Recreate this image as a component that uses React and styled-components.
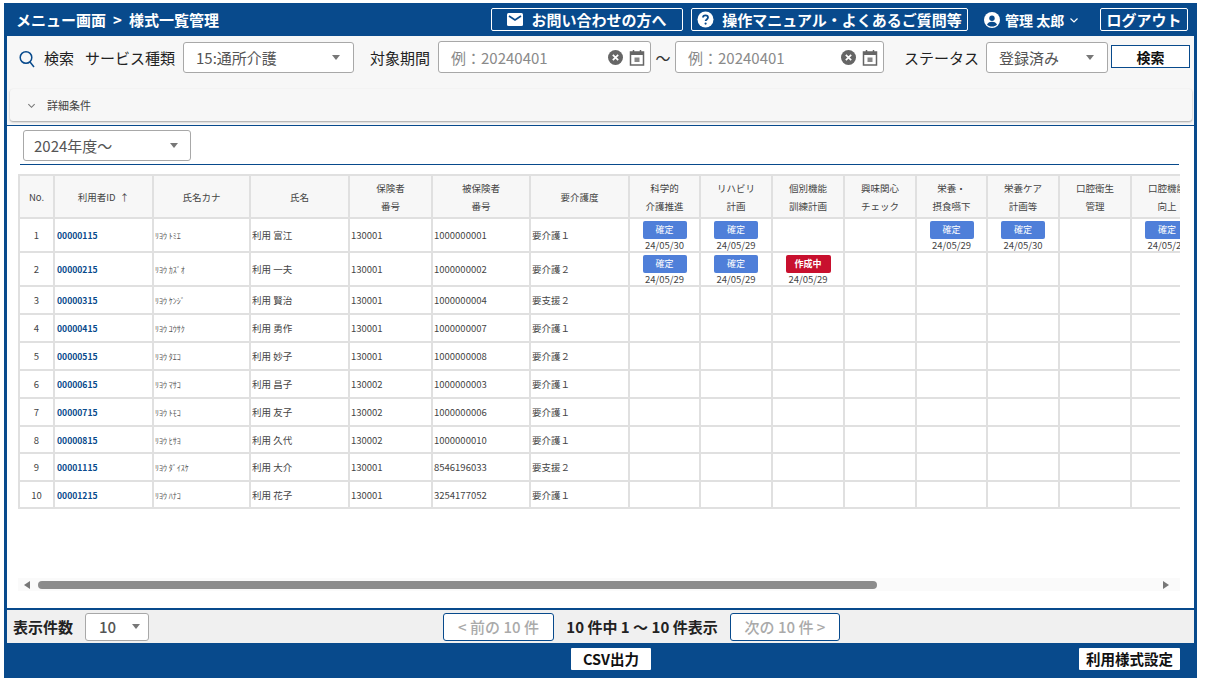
import React from "react";
import styled, { createGlobalStyle } from "styled-components";

const BLUE = "#084a8c";
const FONT = `"Noto Sans CJK JP", "Noto Sans", sans-serif`;

const Global = createGlobalStyle`
  html, body { margin: 0; padding: 0; background: #fff; }
  body { font-family: ${FONT}; color: #222; }
  * { box-sizing: border-box; }
`;

const Frame = styled.div`
  margin: 3px 0 0 4px;
  width: 1193px;
  height: 675px;
  background: ${BLUE};
  padding: 0 3px;
  display: flex;
  flex-direction: column;
`;
const Header = styled.header`
  height: 33px;
  flex: none;
  display: flex;
  align-items: center;
  padding: 0 6px 0 9px;
  color: #fff;
  font-weight: 700;
  font-size: 15px;
`;
const Title = styled.div`
  flex: 1;
  display: flex;
  align-items: center;
  gap: 7px;
  white-space: nowrap;
`;
const HeadButton = styled.div`
  height: 23px;
  width: ${(p) => p.$w}px;
  margin-right: ${(p) => p.$mr || 0}px;
  border: 1px solid #fff;
  border-radius: 2px;
  display: flex;
  align-items: center;
  justify-content: center;
  gap: 8px;
  white-space: nowrap;
`;
const UserMenu = styled.div`
  width: 99px;
  margin-right: 17px;
  display: flex;
  align-items: center;
  gap: 5px;
  font-size: 14px;
  white-space: nowrap;
`;
const SearchArea = styled.section`
  flex: none;
  height: 90px;
  background: #f7f7f7;
  border-bottom: 1px solid ${BLUE};
  padding: 6px 0 0 3px;
`;
const SearchRow = styled.div`
  height: 47px;
  padding-left: 9px;
  display: flex;
  align-items: flex-start;
  font-size: 15px;
  color: #333;
`;
const FieldLabel = styled.span`
  height: 32px;
  line-height: 32px;
  margin-left: ${(p) => p.$ml || 0}px;
  margin-right: ${(p) => p.$mr || 0}px;
  white-space: nowrap;
  color: #222;
`;
const SelectBox = styled.div`
  width: ${(p) => p.$w}px;
  height: ${(p) => p.$h || 31}px;
  flex: none;
  background: #fff;
  border: 1px solid #a8a8a8;
  border-radius: 3px;
  padding: 0 ${(p) => p.$pr || 13}px 0 ${(p) => p.$pl || 12}px;
  display: flex;
  align-items: center;
  justify-content: space-between;
  font-size: 15px;
  color: #555;
  white-space: nowrap;
`;
const Caret = styled.span`
  width: 0;
  height: 0;
  border-left: 4.5px solid transparent;
  border-right: 4.5px solid transparent;
  border-top: 5px solid #777;
`;
const DateBox = styled.div`
  width: ${(p) => p.$w}px;
  height: 32px;
  flex: none;
  margin-top: -1px;
  background: #fff;
  border: 1px solid #a8a8a8;
  border-radius: 3px;
  padding: 0 5px 0 12px;
  display: flex;
  align-items: center;
  gap: 6px;
  font-size: 15px;
  color: #8a8a8a;
`;
const Placeholder = styled.span`
  flex: 1;
  white-space: nowrap;
`;
const Tilde = styled.span`
  width: 24px;
  height: 31px;
  line-height: 31px;
  text-align: center;
  color: #333;
`;
const SearchButton = styled.button`
  width: 79px;
  height: 23px;
  margin: 3px 0 0 3px;
  background: #fff;
  border: 1px solid ${BLUE};
  border-radius: 0;
  font: 700 14px ${FONT};
  color: #111;
  padding: 0;
`;
const Accordion = styled.div`
  height: 32px;
  width: 1182px;
  background: #f7f7f7;
  border-radius: 3px;
  box-shadow: 0 1px 2px rgba(0, 0, 0, 0.35);
  display: flex;
  align-items: center;
  gap: 11px;
  padding-left: 17px;
  font-size: 11px;
  color: #444;
`;
const Content = styled.main`
  flex: 1;
  min-height: 0;
  background: #fff;
  padding: 4px 11px 0 11px;
  display: flex;
  flex-direction: column;
`;
const YearRow = styled.div`
  height: 35px;
  flex: none;
  padding: 0 0 0 3px;
  width: 1159px;
  margin-left: 2px;
  border-bottom: 1px solid ${BLUE};
`;
const TableClip = styled.div`
  margin-top: 9px;
  width: 1162px;
  height: 404px;
  overflow: hidden;
  flex: none;
`;
const Table = styled.table`
  border-collapse: collapse;
  table-layout: fixed;
  width: 1184px;
  font-size: 9.5px;
  color: #444;
`;
const Th = styled.th`
  height: 43px;
  background: #f7f7f7;
  border: 2px solid #e0e0e0;
  font-weight: 400;
  line-height: 18px;
  padding: 0;
  white-space: pre-line;
  text-align: center;
  overflow: hidden;
`;
const Tr = styled.tr`
  height: ${(p) => p.$h}px;
`;
const Td = styled.td`
  border: 2px solid #e0e0e0;
  padding: 0 1px;
  white-space: nowrap;
  overflow: hidden;
  vertical-align: ${(p) => (p.$top ? "top" : "middle")};
  text-align: ${(p) => (p.$center ? "center" : "left")};
`;
const IdText = styled.span`
  color: ${BLUE};
  font-weight: 700;
  font-size: 8.6px;
  padding-left: 1px;
`;
const KanaText = styled.span`
  font-size: 8px;
  color: #555;
`;
const Status = styled.div`
  width: ${(p) => (p.$red ? 45 : 44)}px;
  height: 18px;
  margin: 2px auto 0;
  border-radius: 2px;
  background: ${(p) => (p.$red ? "#c8102e" : "#4f7fd9")};
  color: #fff;
  font-size: 9px;
  font-weight: ${(p) => (p.$red ? 700 : 400)};
  line-height: 18px;
  text-align: center;
`;
const StatusDate = styled.div`
  font-size: 9.5px;
  line-height: 12px;
  color: #444;
`;
const ScrollBar = styled.div`
  width: 1162px;
  height: 13px;
  background: #fafafa;
  display: flex;
  align-items: center;
  padding: 0 10px 0 6px;
`;
const ScrollArrow = styled.span`
  width: 0;
  height: 0;
  flex: none;
  border-top: 4px solid transparent;
  border-bottom: 4px solid transparent;
  ${(p) => (p.$right ? "border-left: 6px solid #777; margin-left: 286px;" : "border-right: 6px solid #777; margin-right: 8px;")}
`;
const ScrollThumb = styled.span`
  width: 839px;
  flex: none;
  height: 8px;
  border-radius: 4px;
  background: #8c8c8c;
`;
const Pager = styled.section`
  flex: none;
  height: 35px;
  background: #f0f0f0;
  border-top: 2px solid ${BLUE};
  display: flex;
  align-items: center;
  padding-left: 6px;
  font-size: 15px;
  font-weight: 500;
  color: #222;
`;
const PagerLabel = styled.span`
  width: 72px;
  font-size: 15px;
  font-weight: 700;
  white-space: nowrap;
`;
const PagerButton = styled.div`
  width: ${(p) => p.$w}px;
  height: 28px;
  flex: none;
  background: #fff;
  border: 1px solid ${BLUE};
  border-radius: 3px;
  color: #aaa;
  font-size: 15px;
  font-weight: 500;
  display: flex;
  align-items: center;
  justify-content: center;
  white-space: nowrap;
  margin-left: ${(p) => p.$ml || 0}px;
`;
const PagerInfo = styled.span`
  width: 176px;
  text-align: center;
  font-weight: 700;
  white-space: nowrap;
`;
const Footer = styled.footer`
  flex: none;
  height: 35px;
  display: flex;
  align-items: flex-start;
  padding-top: 5px;
`;
const FootButton = styled.div`
  width: ${(p) => p.$w}px;
  height: 22px;
  margin-left: ${(p) => p.$ml}px;
  background: #fff;
  border-radius: 1px;
  color: #111;
  font-weight: 700;
  font-size: 14.5px;
  line-height: 22px;
  text-align: center;
  white-space: nowrap;
`;

const Mail = () => (
  <svg width="16" height="13" viewBox="0 0 16 13"><rect x="0" y="0" width="16" height="13" rx="1.5" fill="#fff"/><path d="M2 3l6 4 6-4" fill="none" stroke={BLUE} strokeWidth="1.6"/></svg>
);
const Help = () => (
  <svg width="17" height="17" viewBox="0 0 17 17"><circle cx="8.5" cy="8.5" r="8" fill="#fff"/><path d="M6 6.6C6 5.2 7.1 4.3 8.5 4.3s2.5.9 2.5 2.2c0 1.9-2.4 1.9-2.4 3.6" fill="none" stroke={BLUE} strokeWidth="1.8"/><circle cx="8.6" cy="12.6" r="1.1" fill={BLUE}/></svg>
);
const User = () => (
  <svg width="16" height="16" viewBox="0 0 16 16"><circle cx="8" cy="8" r="8" fill="#fff"/><circle cx="8" cy="6.2" r="2.7" fill={BLUE}/><path d="M3 12.4c1-2 3-2.7 5-2.7s4 .7 5 2.7C11.8 13.8 10 14.5 8 14.5s-3.8-.7-5-2.1z" fill={BLUE}/></svg>
);
const Chevron = ({ color = "#fff", size = 10 }) => (
  <svg width={size} height={size} viewBox="0 0 10 10" style={{ flex: "none" }}><path d="M1.5 3.5L5 7l3.5-3.5" fill="none" stroke={color} strokeWidth="1.2"/></svg>
);
const Search = () => (
  <svg width="16" height="18" viewBox="0 0 16 18" style={{ flex: "none", marginTop: 8 }}><circle cx="7" cy="7.5" r="5.8" fill="none" stroke={BLUE} strokeWidth="1.5"/><path d="M11 12l4 5" stroke={BLUE} strokeWidth="1.5"/></svg>
);
const Clear = () => (
  <svg width="15" height="15" viewBox="0 0 14 14" style={{ flex: "none" }}><circle cx="7" cy="7" r="7" fill="#666"/><path d="M4.5 4.5l5 5M9.5 4.5l-5 5" stroke="#fff" strokeWidth="1.6"/></svg>
);
const Calendar = () => (
  <svg width="16" height="17" viewBox="0 0 15 17" style={{ flex: "none" }}><path d="M1 3h13v13H1z" fill="none" stroke="#666" strokeWidth="1.5"/><path d="M1 3h13v3H1z" fill="#666"/><path d="M4 1v3M11 1v3" stroke="#666" strokeWidth="1.5"/><rect x="5" y="8.5" width="5" height="4.5" fill="#888"/></svg>
);

const columns = [
  ["No.", 35], ["利用者ID\u00a0\u00a0↑", 99], ["氏名カナ", 97], ["氏名", 99], ["保険者\n番号", 83], ["被保険者\n番号", 98], ["要介護度", 99],
  ["科学的\n介護推進", 71], ["リハビリ\n計画", 72], ["個別機能\n訓練計画", 72], ["興味関心\nチェック", 72], ["栄養・\n摂食嚥下", 71], ["栄養ケア\n計画等", 72], ["口腔衛生\n管理", 72], ["口腔機能\n向上", 72],
];
const ok = (d) => ({ label: "確定", date: d });
const rows = [
  ["00000115", "ﾘﾖｳ ﾄﾐｴ", "利用 富江", "130001", "1000000001", "要介護１", 34, { 0: ok("24/05/30"), 1: ok("24/05/29"), 4: ok("24/05/29"), 5: ok("24/05/30"), 7: ok("24/05/29") }],
  ["00000215", "ﾘﾖｳ ｶｽﾞｵ", "利用 一夫", "130001", "1000000002", "要介護２", 34, { 0: ok("24/05/29"), 1: ok("24/05/29"), 2: { label: "作成中", date: "24/05/29", red: true } }],
  ["00000315", "ﾘﾖｳ ｹﾝｼﾞ", "利用 賢治", "130001", "1000000004", "要支援２", 28],
  ["00000415", "ﾘﾖｳ ﾕｳｻｸ", "利用 勇作", "130001", "1000000007", "要介護１", 28],
  ["00000515", "ﾘﾖｳ ﾀｴｺ", "利用 妙子", "130001", "1000000008", "要介護２", 28],
  ["00000615", "ﾘﾖｳ ﾏｻｺ", "利用 昌子", "130002", "1000000003", "要介護１", 28],
  ["00000715", "ﾘﾖｳ ﾄﾓｺ", "利用 友子", "130002", "1000000006", "要介護１", 28],
  ["00000815", "ﾘﾖｳ ﾋｻﾖ", "利用 久代", "130002", "1000000010", "要介護１", 27],
  ["00001115", "ﾘﾖｳ ﾀﾞｲｽｹ", "利用 大介", "130001", "8546196033", "要支援２", 28],
  ["00001215", "ﾘﾖｳ ﾊﾅｺ", "利用 花子", "130001", "3254177052", "要介護１", 27],
];

export default function App() {
  return (
    <Frame>
      <Global />
      <Header>
        <Title>メニュー画面 <span>&gt;</span> 様式一覧管理</Title>
        <HeadButton $w={192} $mr={8}><Mail />お問い合わせの方へ</HeadButton>
        <HeadButton $w={277} $mr={16}><Help />操作マニュアル・よくあるご質問等</HeadButton>
        <UserMenu><User />管理 太郎<Chevron /></UserMenu>
        <HeadButton $w={88}>ログアウト</HeadButton>
      </Header>
      <SearchArea>
        <SearchRow>
          <Search />
          <FieldLabel $ml={9} $mr={11}>検索</FieldLabel>
          <FieldLabel $mr={8}>サービス種類</FieldLabel>
          <SelectBox $w={171}>15:通所介護<Caret /></SelectBox>
          <FieldLabel $ml={16} $mr={8}>対象期間</FieldLabel>
          <DateBox $w={213}><Placeholder>例：20240401</Placeholder><Clear /><Calendar /></DateBox>
          <Tilde>〜</Tilde>
          <DateBox $w={209}><Placeholder>例：20240401</Placeholder><Clear /><Calendar /></DateBox>
          <FieldLabel $ml={20} $mr={7}>ステータス</FieldLabel>
          <SelectBox $w={122}>登録済み<Caret /></SelectBox>
          <SearchButton>検索</SearchButton>
        </SearchRow>
        <Accordion><Chevron color="#777" size={9} />詳細条件</Accordion>
      </SearchArea>
      <Content>
        <YearRow>
          <SelectBox $w={168} $pl={10} $pr={12}>2024年度〜<Caret /></SelectBox>
        </YearRow>
        <TableClip>
          <Table>
            <colgroup>{columns.map(([, w], i) => <col key={i} style={{ width: w }} />)}</colgroup>
            <thead>
              <tr>{columns.map(([t], i) => <Th key={i}>{t}</Th>)}</tr>
            </thead>
            <tbody>
              {rows.map((r, i) => (
                <Tr key={i} $h={r[6]}>
                  <Td $center>{i + 1}</Td>
                  <Td><IdText>{r[0]}</IdText></Td>
                  <Td><KanaText>{r[1]}</KanaText></Td>
                  <Td>{r[2]}</Td>
                  <Td>{r[3]}</Td>
                  <Td>{r[4]}</Td>
                  <Td>{r[5]}</Td>
                  {Array.from({ length: 8 }, (_, c) => {
                    const s = r[7] && r[7][c];
                    return (
                      <Td key={c} $center $top>
                        {s && <><Status $red={s.red}>{s.label}</Status><StatusDate>{s.date}</StatusDate></>}
                      </Td>
                    );
                  })}
                </Tr>
              ))}
            </tbody>
          </Table>
        </TableClip>
        <ScrollBar><ScrollArrow /><ScrollThumb /><ScrollArrow $right /></ScrollBar>
      </Content>
      <Pager>
        <PagerLabel>表示件数</PagerLabel>
        <SelectBox $w={64} $h={28} $pl={13} $pr={8}>10<Caret /></SelectBox>
        <PagerButton $w={111} $ml={294}>&lt; 前の 10 件</PagerButton>
        <PagerInfo>10 件中 1 〜 10 件表示</PagerInfo>
        <PagerButton $w={110}>次の 10 件 &gt;</PagerButton>
      </Pager>
      <Footer>
        <FootButton $w={80} $ml={564}>CSV出力</FootButton>
        <FootButton $w={101} $ml={428}>利用様式設定</FootButton>
      </Footer>
    </Frame>
  );
}
